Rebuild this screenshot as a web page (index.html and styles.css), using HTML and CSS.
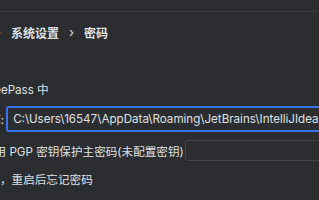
FILE: index.html
```html
<!DOCTYPE html>
<html lang="zh">
<head>
<meta charset="utf-8">
<link rel="stylesheet" href="styles.css">
</head>
<body>
<div class="header"></div>
<nav class="crumbs">
  <span class="sep cut">›</span>
  <span class="crumb">系统设置</span>
  <span class="sep">›</span>
  <span class="crumb">密码</span>
</nav>
<div class="content">
  <div class="row row-keepass"><span class="label lead-keepass">在 KeePass 中</span></div>
  <div class="row row-db">
    <span class="label lead-db">数据库:</span>
    <div class="input focused">C:\Users\16547\AppData\Roaming\JetBrains\IntelliJIdea2023.2\c.kdbx</div>
  </div>
  <div class="row row-pgp">
    <span class="label lead-pgp">使用 PGP 密钥保护主密码(未配置密钥)</span>
    <div class="input plain"></div>
  </div>
  <div class="row row-none"><span class="label lead-none">不保存，重启后忘记密码</span></div>
</div>
</body>
</html>
```
FILE: styles.css
```css
html, body {
  margin: 0;
  padding: 0;
}
body {
  width: 319px;
  height: 200px;
  overflow: hidden;
  background: #2b2d30;
  color: #dfe1e5;
  font-family: "Inter", "Noto Sans CJK SC", sans-serif;
  font-size: 11.6px;
}
.header {
  height: 11px;
  border-bottom: 1px solid #393b40;
}
.crumbs {
  height: 40px;
  display: flex;
  align-items: center;
  gap: 10px;
  font-family: "Noto Sans CJK SC", sans-serif;
  font-size: 12px;
  font-weight: 700;
  white-space: nowrap;
}
.sep {
  font-family: "Inter", sans-serif;
  font-weight: 400;
  font-size: 13px;
}
.sep.cut {
  margin-left: -4px;
}
.content {
  display: flex;
  flex-direction: column;
}
.row {
  display: flex;
  align-items: center;
  white-space: nowrap;
}
.row-keepass {
  height: 25px;
  margin-top: 24px;
}
.row-db {
  height: 26px;
  margin-top: 5px;
}
.row-pgp {
  height: 21px;
  margin-top: 8px;
}
.row-none {
  height: 20px;
  margin-top: 8px;
}
.label {
  flex: none;
}
.lead-keepass { margin-left: -28px; }
.lead-db { margin-left: -34px; }
.lead-pgp { margin-left: -17px; }
.lead-none { margin-left: -34.8px; }
.input {
  flex: none;
  box-sizing: border-box;
  border-radius: 3px;
  background: #2b2d30;
  display: flex;
  align-items: center;
}
.input.focused {
  margin-left: 2px;
  height: 26px;
  width: 600px;
  border: 2px solid #3574f0;
  padding-left: 5px;
}
.input.plain {
  margin-left: 1px;
  width: 200px;
  height: 21px;
  border: 1px solid #43454a;
}
```
